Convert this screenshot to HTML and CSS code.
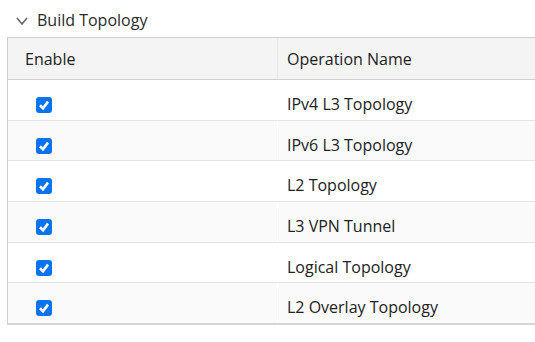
FILE: index.html
```html
<!DOCTYPE html>
<html>
<head>
<meta charset="utf-8">
<link rel="stylesheet" href="styles.css">
</head>
<body>
<div class="section">
  <div class="title">
    <svg class="chev" width="14" height="10" viewBox="0 0 14 10"><polyline points="2,2 7,8 12,2" fill="none" stroke="#666" stroke-width="1.5"/></svg>
    <span>Build Topology</span>
  </div>
  <div class="table">
    <div class="row head">
      <div class="c1">Enable</div>
      <div class="c2">Operation Name</div>
    </div>
    <div class="row">
      <div class="c1"><span class="cb"><svg width="16" height="16" viewBox="0 0 16 16"><polyline points="4,8.3 7,11.2 12,4.6" fill="none" stroke="#fff" stroke-width="2.6"/></svg></span></div>
      <div class="c2">IPv4 L3 Topology</div>
    </div>
    <div class="row alt">
      <div class="c1"><span class="cb"><svg width="16" height="16" viewBox="0 0 16 16"><polyline points="4,8.3 7,11.2 12,4.6" fill="none" stroke="#fff" stroke-width="2.6"/></svg></span></div>
      <div class="c2">IPv6 L3 Topology</div>
    </div>
    <div class="row">
      <div class="c1"><span class="cb"><svg width="16" height="16" viewBox="0 0 16 16"><polyline points="4,8.3 7,11.2 12,4.6" fill="none" stroke="#fff" stroke-width="2.6"/></svg></span></div>
      <div class="c2">L2 Topology</div>
    </div>
    <div class="row alt">
      <div class="c1"><span class="cb"><svg width="16" height="16" viewBox="0 0 16 16"><polyline points="4,8.3 7,11.2 12,4.6" fill="none" stroke="#fff" stroke-width="2.6"/></svg></span></div>
      <div class="c2">L3 VPN Tunnel</div>
    </div>
    <div class="row">
      <div class="c1"><span class="cb"><svg width="16" height="16" viewBox="0 0 16 16"><polyline points="4,8.3 7,11.2 12,4.6" fill="none" stroke="#fff" stroke-width="2.6"/></svg></span></div>
      <div class="c2">Logical Topology</div>
    </div>
    <div class="row alt last">
      <div class="c1"><span class="cb"><svg width="16" height="16" viewBox="0 0 16 16"><polyline points="4,8.3 7,11.2 12,4.6" fill="none" stroke="#fff" stroke-width="2.6"/></svg></span></div>
      <div class="c2">L2 Overlay Topology</div>
    </div>
  </div>
</div>
</body>
</html>
```

FILE: styles.css
```css
html, body {
  margin: 0;
  padding: 0;
  background: #fff;
}
body {
  font-family: "Open Sans", "Noto Sans", sans-serif;
  color: #222;
  overflow: hidden;
}
.section {
  padding: 8px 0 0 7px;
}
.title {
  display: flex;
  align-items: center;
  height: 24px;
  font-size: 16px;
  color: #2a2a2a;
  padding-left: 8px;
  gap: 8px;
  margin-bottom: 5px;
}
.chev {
  display: block;
  margin-top: 1px;
}
.table {
  width: 540px;
  border-left: 1px solid #cfcfcf;
  border-top: 1px solid #cfcfcf;
  border-bottom: 2px solid #d4d4d4;
  font-size: 16px;
}
.row {
  display: flex;
  height: 39.7px;
  border-bottom: 1px solid #e4e4e4;
  box-sizing: content-box;
}
.row.last {
  border-bottom: none;
}
.row.alt {
  background: #fafafa;
}
.row.head {
  height: 41px;
  background: #f4f4f4;
  border-bottom: 1px solid #cfcfcf;
}
.c1 {
  width: 269px;
  display: flex;
  align-items: center;
  padding-left: 28px;
  padding-top: 10px;
  box-sizing: border-box;
}
.c2 {
  flex: 1;
  display: flex;
  align-items: center;
  padding-left: 9px;
  padding-top: 8px;
  border-left: 1px solid #fff;
}
.head .c1 {
  padding-left: 17px;
  padding-top: 0;
}
.head .c2 {
  padding-top: 0;
  border-left: 1px solid #e6e6e6;
}
.cb {
  display: block;
  width: 16px;
  height: 16px;
  border-radius: 3px;
  background: #0b73f0;
}
.cb svg {
  display: block;
}
```
